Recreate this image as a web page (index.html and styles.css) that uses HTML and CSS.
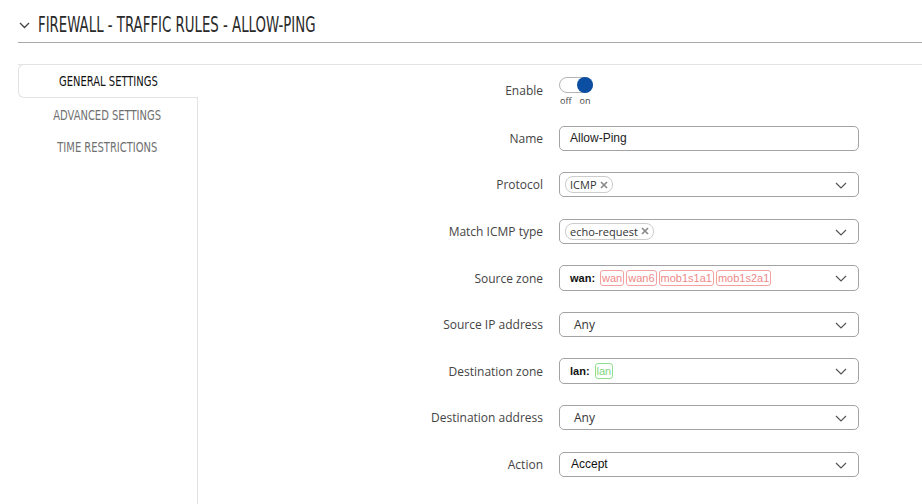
FILE: index.html
```html
<!DOCTYPE html>
<html lang="en">
<head>
    <meta charset="UTF-8">
    <meta name="viewport" content="width=device-width, initial-scale=1.0">
    <title>Firewall - Traffic Rules - Allow-Ping</title>
    <link rel="stylesheet" href="styles.css">
</head>
<body>
    <!-- Section title -->
    <header class="section-head">
        <svg class="head-chevron" width="11" height="7" viewBox="0 0 11 7"><path d="M1 1l4.5 4.5L10 1" fill="none" stroke="#444" stroke-width="1.3"/></svg>
        <h1 class="section-title"><span>FIREWALL - TRAFFIC RULES - ALLOW-PING</span></h1>
    </header>

    <div class="panel">
        <!-- Tabs -->
        <nav class="tabs">
            <div class="tab active"><span>GENERAL SETTINGS</span></div>
            <div class="tab-rest">
                <div class="tab"><span>ADVANCED SETTINGS</span></div>
                <div class="tab"><span>TIME RESTRICTIONS</span></div>
            </div>
        </nav>

        <!-- Form -->
        <form class="form">
            <div class="row row-enable">
                <label class="label">Enable</label>
                <div class="switch-wrap">
                    <div class="switch"><span class="knob"></span></div>
                    <div class="switch-text"><span>off</span><span>on</span></div>
                </div>
            </div>
            <div class="row">
                <label class="label">Name</label>
                <div class="field text-field">Allow-Ping</div>
            </div>
            <div class="row">
                <label class="label">Protocol</label>
                <div class="field select">
                    <span class="pill">ICMP <svg class="x" width="8" height="8" viewBox="0 0 8 8"><path d="M1 1l6 6M7 1L1 7" stroke="#8a8a8a" stroke-width="1.7"/></svg></span>
                    <svg class="arrow" width="12" height="7" viewBox="0 0 12 7"><path d="M1 1l5 5 5-5" fill="none" stroke="#555" stroke-width="1.2"/></svg>
                </div>
            </div>
            <div class="row">
                <label class="label">Match ICMP type</label>
                <div class="field select">
                    <span class="pill">echo-request <svg class="x" width="8" height="8" viewBox="0 0 8 8"><path d="M1 1l6 6M7 1L1 7" stroke="#8a8a8a" stroke-width="1.7"/></svg></span>
                    <svg class="arrow" width="12" height="7" viewBox="0 0 12 7"><path d="M1 1l5 5 5-5" fill="none" stroke="#555" stroke-width="1.2"/></svg>
                </div>
            </div>
            <div class="row">
                <label class="label">Source zone</label>
                <div class="field select zone-field">
                    <strong class="zone-name">wan:</strong>
                    <span class="zone-tag red">wan</span>
                    <span class="zone-tag red">wan6</span>
                    <span class="zone-tag red">mob1s1a1</span>
                    <span class="zone-tag red">mob1s2a1</span>
                    <svg class="arrow" width="12" height="7" viewBox="0 0 12 7"><path d="M1 1l5 5 5-5" fill="none" stroke="#555" stroke-width="1.2"/></svg>
                </div>
            </div>
            <div class="row">
                <label class="label">Source IP address</label>
                <div class="field select plain">
                    <span class="value">Any</span>
                    <svg class="arrow" width="12" height="7" viewBox="0 0 12 7"><path d="M1 1l5 5 5-5" fill="none" stroke="#555" stroke-width="1.2"/></svg>
                </div>
            </div>
            <div class="row">
                <label class="label">Destination zone</label>
                <div class="field select zone-field">
                    <strong class="zone-name">lan:</strong>
                    <span class="zone-tag green">lan</span>
                    <svg class="arrow" width="12" height="7" viewBox="0 0 12 7"><path d="M1 1l5 5 5-5" fill="none" stroke="#555" stroke-width="1.2"/></svg>
                </div>
            </div>
            <div class="row">
                <label class="label">Destination address</label>
                <div class="field select plain">
                    <span class="value">Any</span>
                    <svg class="arrow" width="12" height="7" viewBox="0 0 12 7"><path d="M1 1l5 5 5-5" fill="none" stroke="#555" stroke-width="1.2"/></svg>
                </div>
            </div>
            <div class="row">
                <label class="label">Action</label>
                <div class="field select action">
                    <span class="value-arial">Accept</span>
                    <svg class="arrow" width="12" height="7" viewBox="0 0 12 7"><path d="M1 1l5 5 5-5" fill="none" stroke="#555" stroke-width="1.2"/></svg>
                </div>
            </div>
        </form>
    </div>
</body>
</html>
```

FILE: styles.css
```css
/* General */
body {
    margin: 0;
    padding: 0;
    background-color: #fff;
    color: #333;
    font-family: "Open Sans", Arial, sans-serif;
    height: 504px;
    overflow: hidden;
}
/* Title */
.section-head {
    display: flex;
    align-items: center;
    margin: 0 0 0 18px;
    padding-top: 8px;
    height: 34px;
    border-bottom: 1px solid #aaa;
}
.head-chevron {
    margin-left: 1px;
    margin-top: 1px;
}
.section-title {
    margin: 0 0 0 8px;
    font-family: "Liberation Sans Narrow", "DejaVu Sans Condensed", sans-serif;
    font-weight: normal;
    font-size: 21px;
    color: #2a2a2a;
    line-height: 1;
}
.section-title span {
    display: inline-block;
    transform: scaleX(0.705);
    transform-origin: left center;
}
/* Tabs and panel */
.panel {
    display: flex;
    margin: 21px 0 0 18px;
    border-top: 1px solid #e3e3e3;
    height: 440px;
}
.tabs {
    width: 180px;
    display: flex;
    flex-direction: column;
    margin-top: -1px;
}
.tab {
    height: 32px;
    display: flex;
    align-items: center;
    justify-content: center;
    font-family: "Liberation Sans Narrow", "DejaVu Sans Condensed", sans-serif;
    font-size: 14px;
    color: #707070;
}
.tab span {
    display: inline-block;
    transform: scaleX(0.79);
}
.tab.active {
    color: #111;
    border: 1px solid #e3e3e3;
    border-right: none;
    border-radius: 6px 0 0 6px;
}
.tab-rest {
    flex: 1;
    border-right: 1px solid #e3e3e3;
    padding-top: 1px;
}
/* Form rows */
.form {
    flex: 1;
    padding-top: 1px;
}
.row {
    display: flex;
    align-items: center;
    height: 46.6px;
}
.row-enable {
    height: 49px;
}
.label {
    width: 345px;
    text-align: right;
    padding-right: 16px;
    font-size: 12px;
    color: #444;
}
/* Switch */
.switch-wrap {
    display: flex;
    flex-direction: column;
    padding-top: 2px;
}
.switch {
    position: relative;
    width: 32px;
    height: 14px;
    border: 1px solid #b5b5b5;
    border-radius: 8px;
}
.knob {
    position: absolute;
    right: -1px;
    top: -1px;
    width: 16px;
    height: 16px;
    border-radius: 50%;
    background-color: #0c4fa2;
}
.switch-text {
    display: flex;
    gap: 8px;
    font-size: 9px;
    color: #444;
    margin-top: 1px;
    padding-left: 1px;
}
/* Fields */
.field {
    box-sizing: border-box;
    width: 300px;
    height: 25px;
    border: 1px solid #a3a3a3;
    border-radius: 5px;
    display: flex;
    align-items: center;
    padding-left: 10px;
    font-family: "Liberation Sans", Arial, sans-serif;
    font-size: 12px;
    color: #222;
}
.select {
    position: relative;
    padding-left: 5px;
}
.select.plain {
    padding-left: 14px;
}
.select.action {
    padding-left: 11px;
}
.zone-field {
    padding-left: 10px;
    height: 26px;
}
.arrow {
    position: absolute;
    right: 11px;
    top: 9px;
}
.pill {
    display: flex;
    align-items: center;
    gap: 3px;
    border: 1px solid #ccc;
    border-radius: 8px;
    padding: 0 4px;
    height: 15px;
    font-family: "Open Sans", sans-serif;
    font-size: 11px;
    color: #333;
}
.value {
    font-family: "Open Sans", sans-serif;
    font-size: 12px;
    color: #333;
}
.value-arial {
    font-size: 12px;
    color: #111;
}
.zone-name {
    font-size: 11px;
    color: #111;
    margin-right: 5px;
}
.zone-tag {
    font-size: 11px;
    padding: 0 1px;
    height: 14px;
    line-height: 14px;
    border-radius: 3px;
    margin-right: 2px;
}
.zone-tag.red {
    color: #ee8888;
    border: 1px solid #f2a0a0;
}
.zone-tag.green {
    color: #7ed67e;
    border: 1px solid #8ee08e;
}
```
